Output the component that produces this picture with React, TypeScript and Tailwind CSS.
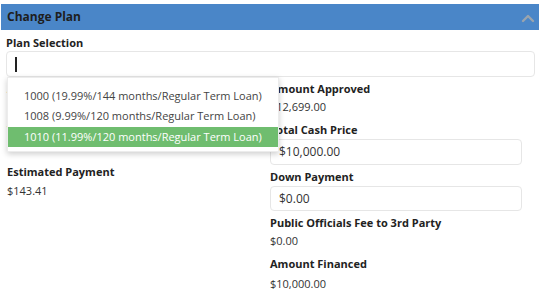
import React from "react";

const Label = ({ children, className = "" }: { children: React.ReactNode; className?: string }) => (
  <div className={`h-[18px] leading-[18px] text-[11px] font-bold text-[#222] whitespace-nowrap ${className}`}>{children}</div>
);
const Value = ({ children, className = "" }: { children: React.ReactNode; className?: string }) => (
  <div className={`h-[18px] leading-[18px] text-[11px] text-[#333] whitespace-nowrap ${className}`}>{children}</div>
);
const Input = ({ value, className = "" }: { value: string; className?: string }) => (
  <div className={`border border-[#e6e6e6] rounded-[4px] bg-white flex items-center px-[8px] text-[12px] text-[#333] ${className}`}>{value}</div>
);

export default function App() {
  return (
    <div className="w-[540px] h-[304px] overflow-hidden bg-white font-['Open_Sans',sans-serif] relative">
      <div className="mt-[4px] mx-[1px] h-[26px] bg-[#4a86c8] flex items-center justify-between pl-[6px] pr-[4px]">
        <span className="text-[12px] font-bold text-[#1e1e1e]">Change Plan</span>
        <svg width="14" height="10" viewBox="0 0 14 10" className="mt-[2px]">
          <path d="M2 8 L7 3 L12 8" stroke="#9aa4ae" strokeWidth="2.4" fill="none" strokeLinecap="round" strokeLinejoin="round" />
        </svg>
      </div>
      <div className="px-[6px]">
        <div className="mt-[5px] h-[16px] leading-[16px] text-[11px] font-bold text-[#222]">Plan Selection</div>
        <div className="h-[26px] border border-[#e6e6e6] rounded-[4px] flex items-center pl-[8px] mr-[-1px]">
          <div className="w-[1.5px] h-[15px] bg-[#222]"></div>
        </div>
        <div className="grid grid-cols-[264px_252px] mt-[3px]">
          <div className="pl-[1px]">
            <Label>Amount Requested</Label>
            <Value>$10,000.00</Value>
            <Label className="mt-[5px]">Term</Label>
            <Value className="mt-[-2px]">$10,000.00</Value>
            <Label className="mt-[8px]">Estimated Payment</Label>
            <Value className="mt-[1px]">$143.41</Value>
          </div>
          <div>
            <Label>Amount Approved</Label>
            <Value>$12,699.00</Value>
            <Label className="mt-[5px] h-[17px] leading-[17px]">Total Cash Price</Label>
            <Input value="$10,000.00" className="h-[26px]" />
            <Label className="mt-[3px]">Down Payment</Label>
            <Input value="$0.00" className="h-[25px]" />
            <Label className="mt-[3px]">Public Officials Fee to 3rd Party</Label>
            <Value>$0.00</Value>
            <Label className="mt-[5px]">Amount Financed</Label>
            <Value className="mt-[2px]">$10,000.00</Value>
          </div>
        </div>
      </div>
      <div className="absolute left-[7px] top-[77px] w-[272px] h-[75px] bg-white border border-[#ececec] shadow-[0_2px_6px_rgba(0,0,0,0.2)] pt-[8px]">
        <div className="h-[20px] leading-[20px] pl-[16px] text-[11px] text-[#444] whitespace-nowrap">1000 (19.99%/144 months/Regular Term Loan)</div>
        <div className="h-[20px] leading-[20px] pl-[16px] text-[11px] text-[#444] whitespace-nowrap">1008 (9.99%/120 months/Regular Term Loan)</div>
        <div className="mt-[1px] h-[20px] leading-[20px] pl-[16px] text-[11px] text-white bg-[#6fbd6f] whitespace-nowrap">1010 (11.99%/120 months/Regular Term Loan)</div>
      </div>
    </div>
  );
}
